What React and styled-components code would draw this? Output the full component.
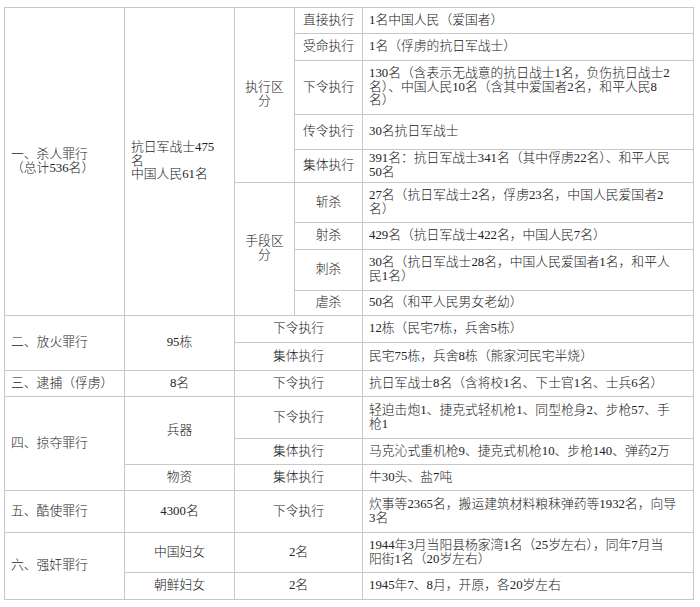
import React from 'react'
import styled, { createGlobalStyle } from 'styled-components'

const GlobalStyle = createGlobalStyle`
    html, body {
        margin: 0;
        padding: 0;
        background: #ffffff;
    }
`

const Page = styled.div`
    padding: 7px 0 0 4px;
    font-family: "Liberation Serif", "Noto Sans CJK SC", serif;
    font-size: 12.8px;
    font-weight: 300;
    color: #222222;
    text-autospace: no-autospace;
`

const Table = styled.table`
    width: 689px;
    table-layout: fixed;
    border-collapse: collapse;
    border: 1px solid #c8c8c8;
`

const Row = styled.tr`
    height: ${props => props.$h}px;
`

const Cell = styled.td`
    border: 1px solid #c8c8c8;
    padding: 0 6px;
    line-height: 13.8px;
    vertical-align: middle;
    text-align: ${props => (props.$center ? 'center' : 'left')};
    white-space: nowrap;
`

const Wrap = styled(Cell)`
    white-space: normal;
`

export default function App() {
  return (
    <>
      <GlobalStyle />
      <Page>
        <Table>
          <colgroup>
            <col style={{ width: 120 }} />
            <col style={{ width: 110 }} />
            <col style={{ width: 60 }} />
            <col style={{ width: 68 }} />
            <col style={{ width: 331 }} />
          </colgroup>
          <tbody>
            <Row $h={26}>
              <Cell rowSpan={9}>一、杀人罪行<br />（总计536名）</Cell>
              <Cell rowSpan={9}>抗日军战士475<br />名<br />中国人民61名</Cell>
              <Wrap rowSpan={5} $center>执行区分</Wrap>
              <Cell $center>直接执行</Cell>
              <Cell>1名中国人民（爱国者）</Cell>
            </Row>
            <Row $h={27}>
              <Cell $center>受命执行</Cell>
              <Cell>1名（俘虏的抗日军战士）</Cell>
            </Row>
            <Row $h={54}>
              <Cell $center>下令执行</Cell>
              <Cell>130名（含表示无战意的抗日战士1名，负伤抗日战士2<br />名）、中国人民10名（含其中爱国者2名，和平人民8<br />名）</Cell>
            </Row>
            <Row $h={35}>
              <Cell $center>传令执行</Cell>
              <Cell>30名抗日军战士</Cell>
            </Row>
            <Row $h={33}>
              <Cell $center>集体执行</Cell>
              <Cell>391名：抗日军战士341名（其中俘虏22名）、和平人民<br />50名</Cell>
            </Row>
            <Row $h={40}>
              <Wrap rowSpan={4} $center>手段区分</Wrap>
              <Cell $center>斩杀</Cell>
              <Cell>27名（抗日军战士2名，俘虏23名，中国人民爱国者2<br />名）</Cell>
            </Row>
            <Row $h={27}>
              <Cell $center>射杀</Cell>
              <Cell>429名（抗日军战士422名，中国人民7名）</Cell>
            </Row>
            <Row $h={41}>
              <Cell $center>刺杀</Cell>
              <Cell>30名（抗日军战士28名，中国人民爱国者1名，和平人<br />民1名）</Cell>
            </Row>
            <Row $h={25}>
              <Cell $center>虐杀</Cell>
              <Cell>50名（和平人民男女老幼）</Cell>
            </Row>

            <Row $h={27}>
              <Cell rowSpan={2}>二、放火罪行</Cell>
              <Cell rowSpan={2} $center>95栋</Cell>
              <Cell colSpan={2} $center>下令执行</Cell>
              <Cell>12栋（民宅7栋，兵舍5栋）</Cell>
            </Row>
            <Row $h={28}>
              <Cell colSpan={2} $center>集体执行</Cell>
              <Cell>民宅75栋，兵舍8栋（熊家河民宅半烧）</Cell>
            </Row>

            <Row $h={26}>
              <Cell>三、逮捕（俘虏）</Cell>
              <Cell $center>8名</Cell>
              <Cell colSpan={2} $center>下令执行</Cell>
              <Cell>抗日军战士8名（含将校1名、下士官1名、士兵6名）</Cell>
            </Row>

            <Row $h={42}>
              <Cell rowSpan={3}>四、掠夺罪行</Cell>
              <Cell rowSpan={2} $center>兵器</Cell>
              <Cell colSpan={2} $center>下令执行</Cell>
              <Cell>轻迫击炮1、捷克式轻机枪1、同型枪身2、步枪57、手<br />枪1</Cell>
            </Row>
            <Row $h={26}>
              <Cell colSpan={2} $center>集体执行</Cell>
              <Cell>马克沁式重机枪9、捷克式机枪10、步枪140、弹药2万</Cell>
            </Row>
            <Row $h={26}>
              <Cell $center>物资</Cell>
              <Cell colSpan={2} $center>集体执行</Cell>
              <Cell>牛30头、盐7吨</Cell>
            </Row>

            <Row $h={42}>
              <Cell>五、酷使罪行</Cell>
              <Cell $center>4300名</Cell>
              <Cell colSpan={2} $center>下令执行</Cell>
              <Cell>炊事等2365名，搬运建筑材料粮秣弹药等1932名，向导<br />3名</Cell>
            </Row>

            <Row $h={40}>
              <Cell rowSpan={2}>六、强奸罪行</Cell>
              <Cell $center>中国妇女</Cell>
              <Cell colSpan={2} $center>2名</Cell>
              <Cell>1944年3月当阳县杨家湾1名（25岁左右），同年7月当<br />阳街1名（20岁左右）</Cell>
            </Row>
            <Row $h={27}>
              <Cell $center>朝鲜妇女</Cell>
              <Cell colSpan={2} $center>2名</Cell>
              <Cell>1945年7、8月，开原，各20岁左右</Cell>
            </Row>
          </tbody>
        </Table>
      </Page>
    </>
  )
}
